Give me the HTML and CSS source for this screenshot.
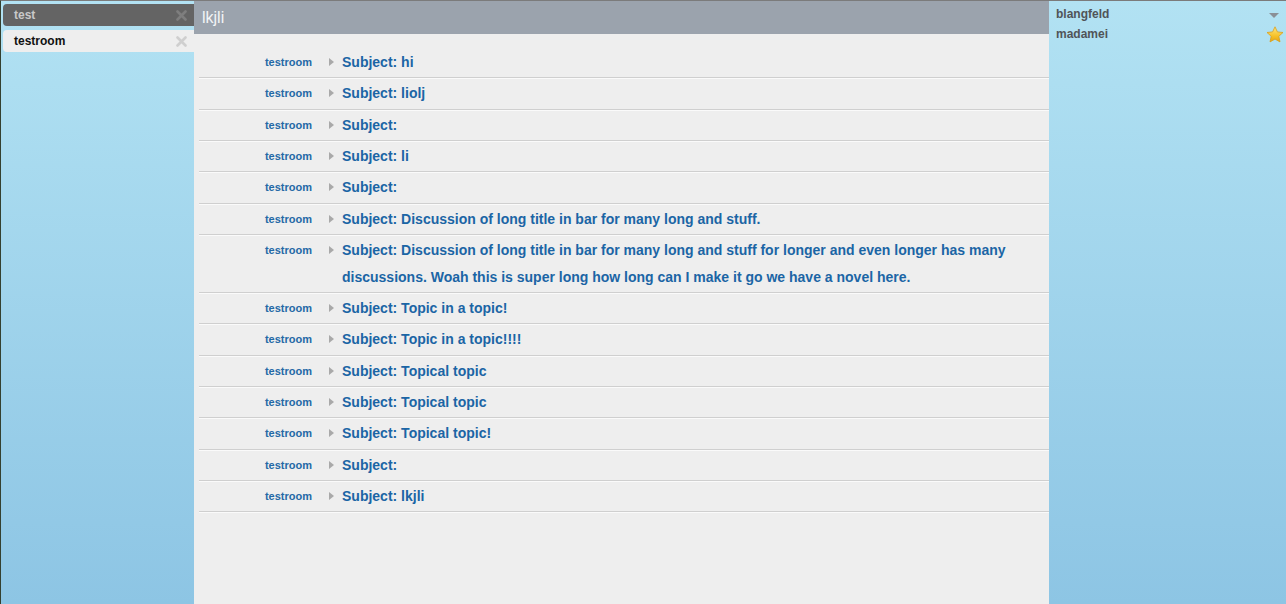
FILE: index.html
```html
<!DOCTYPE html>
<html>
<head>
<meta charset="utf-8">
<link rel="stylesheet" href="styles.css">
</head>
<body>
<div class="app">
  <aside class="rooms">
    <div class="tab tab-active">
      <span class="tab-name">test</span>
      <svg class="close" width="11" height="11" viewBox="0 0 11 11"><path d="M1.5 1.5 L9.5 9.5 M9.5 1.5 L1.5 9.5" stroke="currentColor" stroke-width="2.6" stroke-linecap="round"/></svg>
    </div>
    <div class="tab tab-light">
      <span class="tab-name">testroom</span>
      <svg class="close" width="11" height="11" viewBox="0 0 11 11"><path d="M1.5 1.5 L9.5 9.5 M9.5 1.5 L1.5 9.5" stroke="currentColor" stroke-width="2.6" stroke-linecap="round"/></svg>
    </div>
  </aside>
  <main class="main">
    <header class="title">lkjli</header>
    <ul class="topics">
      <li class="topic"><span class="room">testroom</span><span class="tri"></span><span class="subject">Subject: hi</span></li>
      <li class="topic"><span class="room">testroom</span><span class="tri"></span><span class="subject">Subject: liolj</span></li>
      <li class="topic"><span class="room">testroom</span><span class="tri"></span><span class="subject">Subject:</span></li>
      <li class="topic"><span class="room">testroom</span><span class="tri"></span><span class="subject">Subject: li</span></li>
      <li class="topic"><span class="room">testroom</span><span class="tri"></span><span class="subject">Subject:</span></li>
      <li class="topic"><span class="room">testroom</span><span class="tri"></span><span class="subject">Subject: Discussion of long title in bar for many long and stuff.</span></li>
      <li class="topic"><span class="room">testroom</span><span class="tri"></span><span class="subject">Subject: Discussion of long title in bar for many long and stuff for longer and even longer has many discussions. Woah this is super long how long can I make it go we have a novel here.</span></li>
      <li class="topic"><span class="room">testroom</span><span class="tri"></span><span class="subject">Subject: Topic in a topic!</span></li>
      <li class="topic"><span class="room">testroom</span><span class="tri"></span><span class="subject">Subject: Topic in a topic!!!!</span></li>
      <li class="topic"><span class="room">testroom</span><span class="tri"></span><span class="subject">Subject: Topical topic</span></li>
      <li class="topic"><span class="room">testroom</span><span class="tri"></span><span class="subject">Subject: Topical topic</span></li>
      <li class="topic"><span class="room">testroom</span><span class="tri"></span><span class="subject">Subject: Topical topic!</span></li>
      <li class="topic"><span class="room">testroom</span><span class="tri"></span><span class="subject">Subject:</span></li>
      <li class="topic"><span class="room">testroom</span><span class="tri"></span><span class="subject">Subject: lkjli</span></li>
    </ul>
  </main>
  <aside class="users">
    <div class="user">
      <span class="user-name">blangfeld</span>
      <svg class="drop" width="10" height="5" viewBox="0 0 10 5"><path d="M0 0 H10 L5 5 Z" fill="#8a8f96"/></svg>
    </div>
    <div class="user">
      <span class="user-name">madamei</span>
      <svg class="star" width="18" height="17" viewBox="0 0 18 17">
        <defs>
          <linearGradient id="sg" x1="0" y1="0" x2="0" y2="1">
            <stop offset="0" stop-color="#ffe680"/>
            <stop offset="0.6" stop-color="#f6c22a"/>
            <stop offset="1" stop-color="#e8a50f"/>
          </linearGradient>
        </defs>
        <path d="M9 0.8 L11.4 5.9 L17 6.5 L12.8 10.3 L14 15.9 L9 13.1 L4 15.9 L5.2 10.3 L1 6.5 L6.6 5.9 Z" fill="url(#sg)" stroke="#d9a020" stroke-width="0.8" stroke-linejoin="round"/>
      </svg>
    </div>
  </aside>
</div>
</body>
</html>
```
FILE: styles.css
```css
* { box-sizing: border-box; }
html, body {
  margin: 0;
  padding: 0;
  height: 100%;
  overflow: hidden;
}
body {
  font-family: "Liberation Sans", Arial, Helvetica, sans-serif;
}
.app {
  display: flex;
  height: 604px;
  border-top: 1px solid #7b7b7b;
  border-left: 1px solid #34402f;
}
.rooms {
  width: 193px;
  flex: none;
  background: linear-gradient(#b2e2f3, #8dc5e4);
  padding-top: 3px;
  padding-left: 2px;
  display: flex;
  flex-direction: column;
  gap: 4px;
}
.tab {
  height: 22px;
  display: flex;
  align-items: center;
  justify-content: space-between;
  padding: 0 7px 0 11px;
  border-radius: 4px 0 0 4px;
  font-size: 12px;
  font-weight: bold;
}
.tab-active {
  background: #646464;
  color: #c9c9c9;
}
.tab-active .close { color: #7e7e7e; }
.tab-light {
  background: #eeeeee;
  color: #111;
}
.tab-light .close { color: #cfcfcf; }
.main {
  width: 855px;
  flex: none;
  background: #eeeeee;
}
.title {
  height: 33px;
  background: #9ba3ad;
  color: #f2f4f6;
  font-size: 16px;
  line-height: 33px;
  padding-left: 8px;
}
.topics {
  list-style: none;
  margin: 13px 0 0 5px;
  padding: 0;
}
.topic {
  display: flex;
  align-items: flex-start;
  padding: 2px 0 1.67px;
  line-height: 26.67px;
  border-bottom: 1px solid #cfcfcf;
  box-shadow: 0 1px 0 #fafafa;
}
.room {
  width: 113px;
  flex: none;
  text-align: right;
  font-size: 11px;
  font-weight: bold;
  color: #2469a6;
}
.tri {
  flex: none;
  width: 0;
  height: 0;
  margin: 9px 8px 0 17px;
  border-top: 4.5px solid transparent;
  border-bottom: 4.5px solid transparent;
  border-left: 5px solid #a9a9a9;
}
.subject {
  font-size: 14px;
  font-weight: bold;
  color: #1b65a5;
  padding-right: 30px;
}
.users {
  flex: 1;
  background: linear-gradient(#b2e2f3, #8dc5e4);
  padding: 3px 3px 0 7px;
}
.user {
  height: 20px;
  display: flex;
  align-items: center;
  justify-content: space-between;
  font-size: 12px;
  font-weight: bold;
  color: #505458;
}
.drop { margin-right: 4px; margin-top: 3px; }
.star { margin-right: -1px; }
```
